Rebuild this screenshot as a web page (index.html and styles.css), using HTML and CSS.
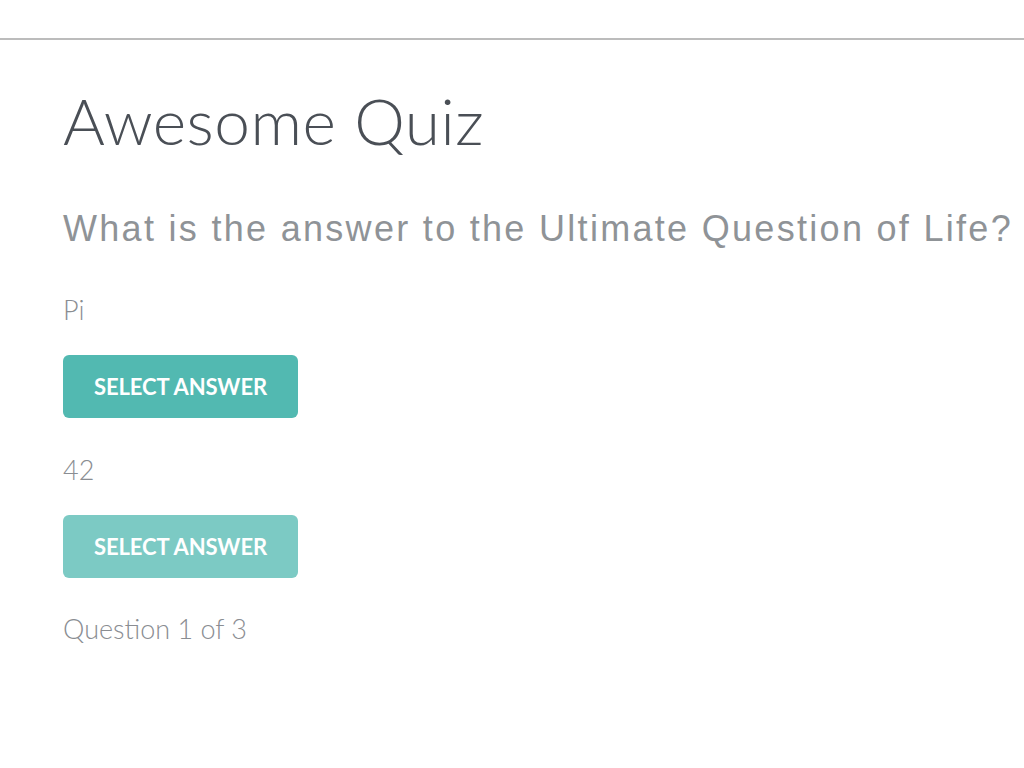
FILE: index.html
```html
<!DOCTYPE html>
<html>
<head>
<meta charset="utf-8">
<link rel="stylesheet" href="styles.css">
</head>
<body>
<div class="topbar"></div>
<main class="quiz">
  <h1 class="title">Awesome Quiz</h1>
  <h2 class="question">What is the answer to the Ultimate Question of Life?</h2>
  <div class="answer">
    <p class="answer-text">Pi</p>
    <button class="btn">SELECT ANSWER</button>
  </div>
  <div class="answer">
    <p class="answer-text">42</p>
    <button class="btn btn-light">SELECT ANSWER</button>
  </div>
  <p class="progress">Question 1 of 3</p>
</main>
</body>
</html>
```
FILE: styles.css
```css
html, body {
  margin: 0;
  padding: 0;
  background: #ffffff;
}
body {
  font-family: Lato, "Open Sans", sans-serif;
  overflow: hidden;
}
.topbar {
  height: 38px;
  border-bottom: 2px solid #bcbcbc;
}
.quiz {
  padding: 0 0 0 63px;
  display: flex;
  flex-direction: column;
  align-items: flex-start;
}
.title {
  margin: 43px 0 0 0;
  font-family: Lato, sans-serif;
  font-weight: 300;
  font-size: 64px;
  line-height: 76px;
  color: #4a4f56;
  letter-spacing: 0.5px;
}
.question {
  margin: 50px 0 9px 0;
  font-family: "Liberation Sans", Arial, sans-serif;
  font-weight: 400;
  font-size: 36px;
  line-height: 40px;
  letter-spacing: 2.3px;
  color: #8f9397;
  white-space: nowrap;
}
.answer {
  display: flex;
  flex-direction: column;
  align-items: flex-start;
}
.answer-text {
  margin: 36px 0 0 0;
  font-weight: 300;
  font-size: 27px;
  line-height: 32px;
  color: #8a8d92;
}
.btn {
  margin-top: 29px;
  width: 235px;
  height: 63px;
  border: 0;
  border-radius: 6px;
  background: #52b9b1;
  color: #ffffff;
  font-family: Lato, sans-serif;
  font-weight: 700;
  font-size: 22px;
  letter-spacing: -0.1px;
  padding: 0;
}
.btn-light {
  background: #7ccac4;
}
.progress {
  margin: 35px 0 0 0;
  font-weight: 300;
  font-size: 27px;
  line-height: 32px;
  color: #8a8d92;
}
```
